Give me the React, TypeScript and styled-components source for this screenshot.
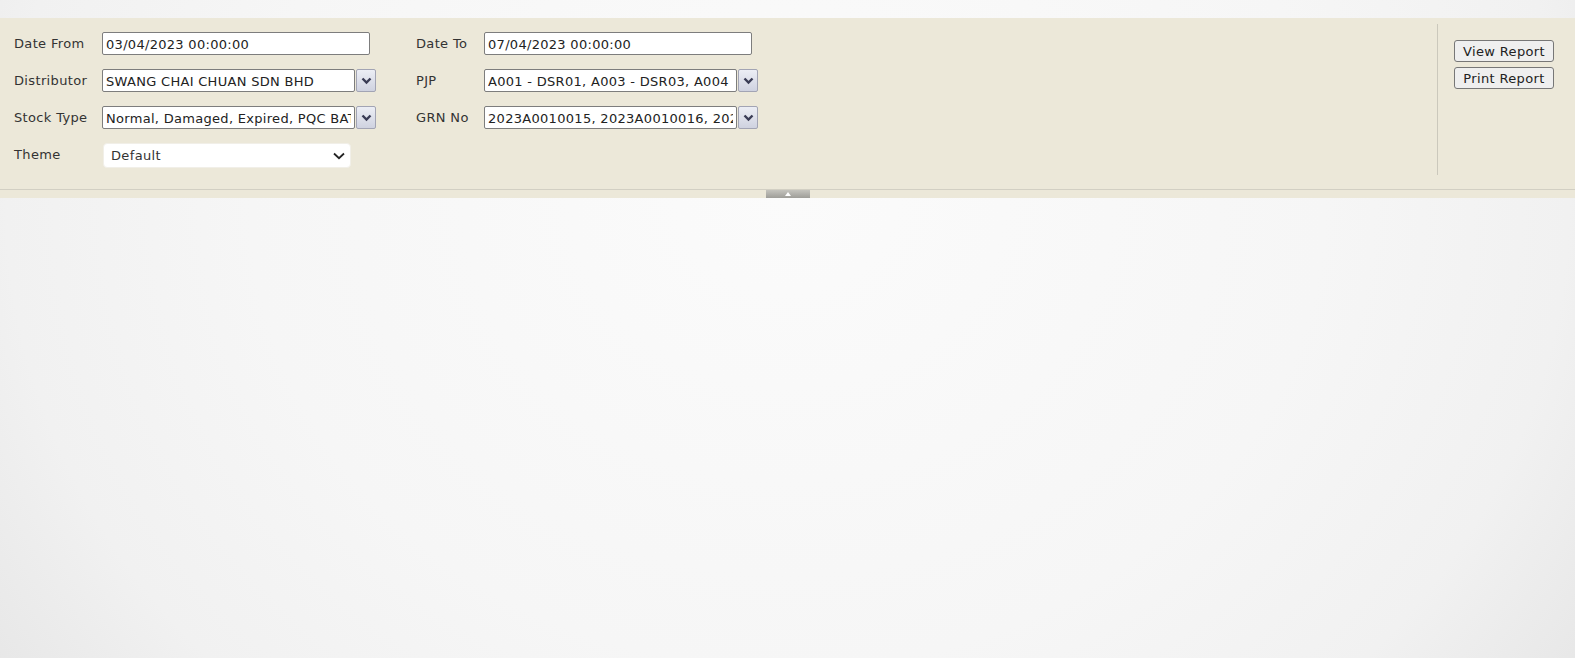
import React from "react";
import styled, { createGlobalStyle } from "styled-components";

const Global = createGlobalStyle`
  html, body { margin: 0; padding: 0; height: 100%; }
  body {
    font-family: "DejaVu Sans", Verdana, sans-serif;
    font-size: 13px;
    letter-spacing: 0.35px;
    color: #333;
  }
  #root { height: 100%; }
`;

const Page = styled.div`
  height: 658px;
  padding-top: 18px;
  box-sizing: border-box;
  background:
    radial-gradient(ellipse 62% 130% at 50% 30%, #fbfbfb 0%, #f6f6f6 55%, #f1f1f1 80%, #e6e6e6 100%);
  display: flex;
  flex-direction: column;
`;

const Panel = styled.div`
  background: #ece8d9;
`;

const PanelBody = styled.div`
  display: flex;
  height: 171px;
  border-bottom: 1px solid #d2cfc3;
`;

const Form = styled.div`
  flex: 1;
  padding: 14px 0 0 14px;
  display: grid;
  grid-template-columns: 88px 314px 68px 274px;
  grid-auto-rows: 23px;
  row-gap: 14px;
  align-content: start;
`;

const Label = styled.label`
  display: flex;
  align-items: center;
  color: #333;
  white-space: nowrap;
`;

const TextInput = styled.input<{ $w: number }>`
  box-sizing: border-box;
  width: ${(p) => p.$w}px;
  height: 23px;
  margin: 0;
  padding: 1px 3px 0;
  border: 1px solid #7d7d7d;
  border-radius: 2px;
  background: #fff;
  font-family: "DejaVu Sans", Verdana, sans-serif;
  font-size: 13px;
  letter-spacing: 0.3px;
  color: #222;
  outline: none;
`;

const Combo = styled.div`
  display: flex;
  align-items: stretch;
  gap: 1px;
  height: 23px;
`;

const DropBtn = styled.button`
  box-sizing: border-box;
  width: 20px;
  height: 23px;
  margin: 0;
  padding: 0;
  border: 1px solid #a2a4b4;
  border-radius: 2px;
  background: linear-gradient(#eceef5, #cfd2e0);
  display: flex;
  align-items: center;
  justify-content: center;
`;

const ThemeSelect = styled.div`
  box-sizing: border-box;
  width: 248px;
  height: 25px;
  margin-left: 1px;
  padding: 0 5px 0 7px;
  background: #fff;
  border: 1px solid #f1efe8;
  border-radius: 4px;
  display: flex;
  align-items: center;
  justify-content: space-between;
  color: #333;
`;

const Side = styled.div`
  width: 138px;
  margin: 6px 0 14px;
  border-left: 1px solid #cbc8bc;
  padding: 16px 0 0 16px;
  box-sizing: border-box;
  display: flex;
  flex-direction: column;
  align-items: flex-start;
  gap: 5px;
`;

const ActionButton = styled.button`
  box-sizing: border-box;
  height: 22px;
  min-width: 100px;
  padding: 0 6px;
  margin: 0;
  border: 1px solid #777;
  border-radius: 3px;
  background: #efefef;
  font-family: "DejaVu Sans", Verdana, sans-serif;
  font-size: 13px;
  letter-spacing: 0.35px;
  color: #222;
  white-space: nowrap;
`;

const Footer = styled.div`
  height: 8px;
  display: flex;
  justify-content: center;
`;

const CollapseTab = styled.div`
  width: 44px;
  height: 8px;
  background: linear-gradient(#c4c3bd, #9e9d98);
  display: flex;
  justify-content: center;
  align-items: flex-start;
  padding-top: 2px;
  box-sizing: border-box;
`;

const Chevron = () => (
  <svg width="11" height="8" viewBox="0 0 11 8">
    <path d="M1.5 1.5 L5.5 5.5 L9.5 1.5" fill="none" stroke="#3a3c55" strokeWidth="2.4" />
  </svg>
);

const SelectChevron = () => (
  <svg width="12" height="8" viewBox="0 0 12 8">
    <path d="M1 1.5 L6 6.2 L11 1.5" fill="none" stroke="#222" strokeWidth="1.8" />
  </svg>
);

const ComboField = ({ value }: { value: string }) => (
  <Combo>
    <TextInput $w={253} readOnly value={value} />
    <DropBtn type="button">
      <Chevron />
    </DropBtn>
  </Combo>
);

export default function App() {
  return (
    <>
      <Global />
      <Page>
        <Panel>
          <PanelBody>
            <Form>
              <Label>Date From</Label>
              <div><TextInput $w={268} readOnly value="03/04/2023 00:00:00" /></div>
              <Label>Date To</Label>
              <div><TextInput $w={268} readOnly value="07/04/2023 00:00:00" /></div>

              <Label>Distributor</Label>
              <ComboField value="SWANG CHAI CHUAN SDN BHD" />
              <Label>PJP</Label>
              <ComboField value="A001 - DSR01, A003 - DSR03, A004 - DSR04" />

              <Label>Stock Type</Label>
              <ComboField value="Normal, Damaged, Expired, PQC BATCH" />
              <Label>GRN No</Label>
              <ComboField value="2023A0010015, 2023A0010016, 2023A0010017" />

              <Label>Theme</Label>
              <ThemeSelect>
                <span>Default</span>
                <SelectChevron />
              </ThemeSelect>
            </Form>
            <Side>
              <ActionButton type="button">View Report</ActionButton>
              <ActionButton type="button">Print Report</ActionButton>
            </Side>
          </PanelBody>
          <Footer>
            <CollapseTab>
              <svg width="6" height="4" viewBox="0 0 6 4">
                <path d="M0 4 L3 0 L6 4 Z" fill="#fff" />
              </svg>
            </CollapseTab>
          </Footer>
        </Panel>
      </Page>
    </>
  );
}
